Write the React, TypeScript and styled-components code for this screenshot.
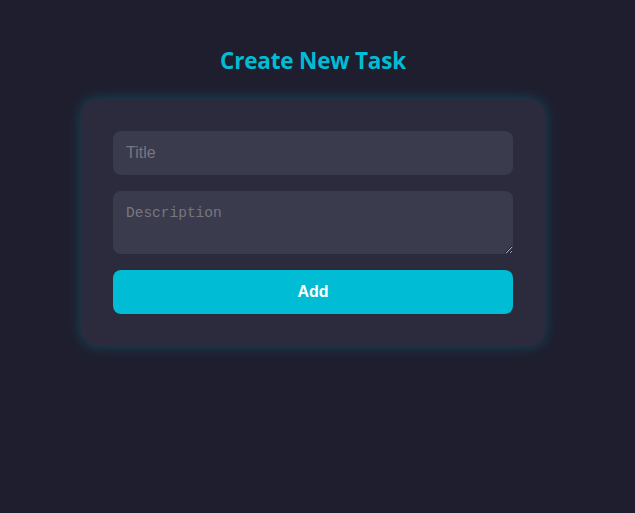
import React from 'react';
import styled, { createGlobalStyle } from 'styled-components';

const GlobalStyle = createGlobalStyle`
  html, body {
    margin: 0;
    padding: 0;
    background: #1e1e2e;
    min-height: 100%;
  }
  body {
    font-family: 'Liberation Sans', Arial, sans-serif;
  }
`;

const Page = styled.div`
  min-height: 513px;
  box-sizing: border-box;
  padding: 45px 9px 0 0;
  display: flex;
  flex-direction: column;
  align-items: center;
  background: #1e1e2e;
`;

const Heading = styled.h2`
  margin: 0 0 23px;
  font-family: 'Open Sans', 'Noto Sans', sans-serif;
  font-size: 22.5px;
  font-weight: 700;
  line-height: 31px;
  color: #00bcd4;
  letter-spacing: -0.2px;
`;

const Card = styled.form`
  width: 464px;
  box-sizing: border-box;
  padding: 32px 32px;
  background: #2c2b3d;
  border-radius: 16px;
  box-shadow: 0 0 14px rgba(0, 188, 212, 0.28);
  display: flex;
  flex-direction: column;
  gap: 16px;
`;

const Field = styled.input`
  height: 44px;
  box-sizing: border-box;
  padding: 0 13px;
  border: none;
  border-radius: 8px;
  background: #3b3b4e;
  color: #e0e0e0;
  font-family: 'Liberation Sans', Arial, sans-serif;
  font-size: 16px;
  outline: none;
  &::placeholder {
    color: #77777f;
  }
`;

const Area = styled.textarea`
  height: 63px;
  box-sizing: border-box;
  padding: 14px 13px 10px;
  border: none;
  border-radius: 8px;
  background: #3b3b4e;
  color: #e0e0e0;
  font-family: 'Liberation Mono', 'DejaVu Sans Mono', monospace;
  font-size: 14.5px;
  outline: none;
  &::placeholder {
    color: #77777f;
  }
`;

const AddButton = styled.button`
  height: 44px;
  border: none;
  border-radius: 8px;
  background: #00bcd4;
  color: #ffffff;
  font-family: 'Liberation Sans', Arial, sans-serif;
  font-size: 16px;
  font-weight: 700;
  cursor: pointer;
`;

export default function App() {
  return (
    <>
      <GlobalStyle />
      <Page>
        <Heading>Create New Task</Heading>
        <Card onSubmit={e => e.preventDefault()}>
          <Field type="text" placeholder="Title" />
          <Area placeholder="Description" />
          <AddButton type="submit">Add</AddButton>
        </Card>
      </Page>
    </>
  );
}
